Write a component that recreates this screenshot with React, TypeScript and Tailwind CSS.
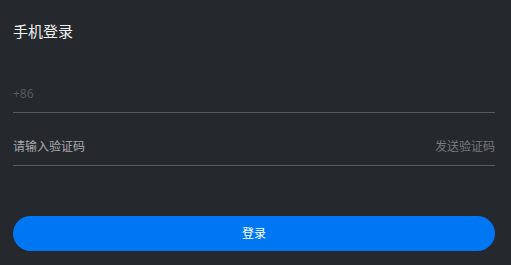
import React from "react";

export default function App() {
  return (
    <div
      className="w-[511px] h-[265px] bg-[#25282d] pl-[13px] pr-[16px] pt-[22px] overflow-hidden"
      style={{ fontFamily: '"Noto Sans", "Noto Sans CJK SC", sans-serif' }}
    >
      {/* Title */}
      <h1 className="text-[15px] leading-[18px] font-normal text-[#f2f2f2]">手机登录</h1>

      {/* Phone row */}
      <div className="mt-[32px] h-[41px] flex items-end pb-[10px] border-b border-[#56595e]">
        <span className="text-[12px] leading-[17px] text-[#55585d]">+86</span>
      </div>

      {/* Code row */}
      <div className="mt-[12px] h-[41px] flex items-end justify-between pb-[10px] border-b border-[#56595e]">
        <span className="text-[12px] leading-[17px] text-[#a8aaad]">请输入验证码</span>
        <span className="text-[12px] leading-[17px] text-[#77797d]">发送验证码</span>
      </div>

      {/* Submit */}
      <button className="mt-[50px] w-full h-[35px] rounded-full bg-[#0077f2] text-white text-[12px] flex items-center justify-center">
        登录
      </button>
    </div>
  );
}
